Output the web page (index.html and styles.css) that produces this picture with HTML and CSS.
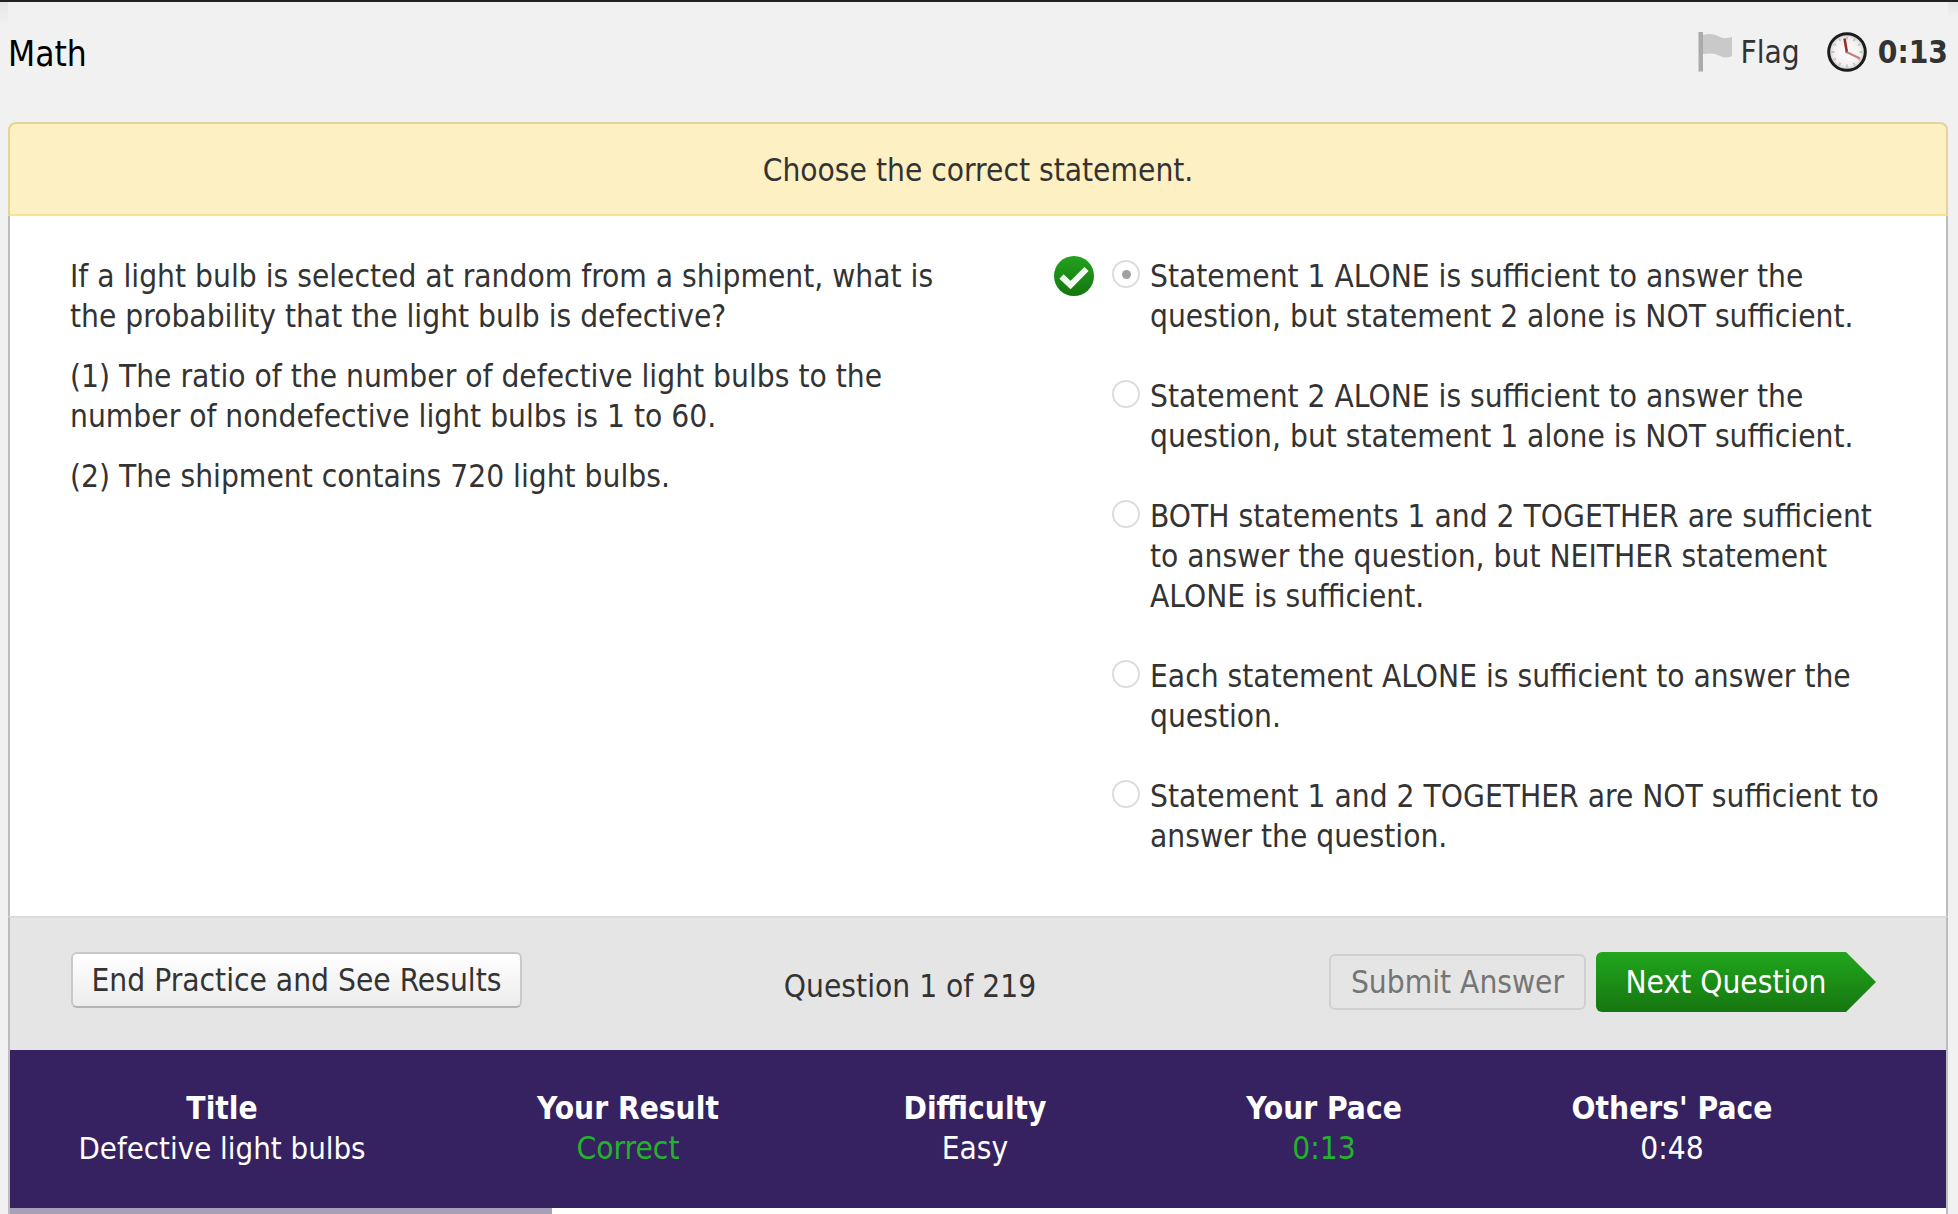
FILE: index.html
```html
<!DOCTYPE html>
<html lang="en">
<head>
<meta charset="utf-8">
<title>Math</title>
<link rel="stylesheet" href="styles.css">
</head>
<body>
<header class="topbar">
  <h1 class="section-name">Math</h1>
  <div class="tools">
    <span class="flag">
      <svg class="flag-icon" width="36" height="40" viewBox="0 0 36 40"><defs><filter id="soft" x="-10%" y="-10%" width="120%" height="120%"><feGaussianBlur stdDeviation=".45"/></filter></defs><g filter="url(#soft)"><rect x="1.500" y="0" width="4.500" height="39.500" fill="#ababab"/><path d="M6 3C12 1 18 2 23 5C27 7 31 6 35 5V24C31 26 27 26 23 24C18 21 12 21 6 22Z" fill="#c9c9c9"/></g></svg>
      <span>Flag</span>
    </span>
    <span class="timer">
      <svg class="clock" width="40" height="40" viewBox="0 0 40 40"><defs><filter id="softc" x="-10%" y="-10%" width="120%" height="120%"><feGaussianBlur stdDeviation=".4"/></filter><radialGradient id="cg" cx=".5" cy=".5" r=".55"><stop offset="0" stop-color="#fff"/><stop offset=".68" stop-color="#f3efef"/><stop offset="1" stop-color="#b5b5b5"/></radialGradient></defs><g filter="url(#softc)"><circle cx="20" cy="20" r="18.300" fill="url(#cg)" stroke="#1e1e1e" stroke-width="3"/><path d="M20 4.500v3M20 32.500v3M4.500 20h3M32.500 20h3M12 6.500l1.500 2.500M28 6.500l-1.500 2.500M6.500 12l2.500 1.500M33.500 12l-2.500 1.500M6.500 28l2.500-1.500M33.500 28l-2.500-1.500M12 33.500l1.500-2.500M28 33.500l-1.500-2.500" stroke="#c4c4c4" stroke-width="1.800"/><path d="M17.500 6.500L20 21" stroke="#9c2f2f" stroke-width="2.600"/><path d="M19.500 20L33 26.500" stroke="#c77c7c" stroke-width="2"/></g></svg>
      <b class="time">0:13</b>
    </span>
  </div>
</header>

<main class="panel">
  <div class="prompt">Choose the correct statement.</div>
  <div class="question-body">
    <section class="stem">
      <p>If a light bulb is selected at random from a shipment, what is<br>the probability that the light bulb is defective?</p>
      <p>(1) The ratio of the number of defective light bulbs to the<br>number of nondefective light bulbs is 1 to 60.</p>
      <p>(2) The shipment contains 720 light bulbs.</p>
    </section>
    <ul class="choices">
      <li class="choice">
        <span class="mark"><svg width="40" height="40" viewBox="0 0 40 40"><defs><linearGradient id="ck" x1="0" y1="0" x2="0" y2="1"><stop offset="0" stop-color="#22a21e"/><stop offset="1" stop-color="#14760f"/></linearGradient></defs><circle cx="20" cy="20" r="20" fill="url(#ck)"/><path d="M7.500 20.500L16.500 29L32.500 13" fill="none" stroke="#f4fbf4" stroke-width="6"/></svg></span>
        <span class="radio selected"></span>
        <span class="choice-text">Statement 1 ALONE is sufficient to answer the<br>question, but statement 2 alone is NOT sufficient.</span>
      </li>
      <li class="choice">
        <span class="mark"></span><span class="radio"></span>
        <span class="choice-text">Statement 2 ALONE is sufficient to answer the<br>question, but statement 1 alone is NOT sufficient.</span>
      </li>
      <li class="choice">
        <span class="mark"></span><span class="radio"></span>
        <span class="choice-text">BOTH statements 1 and 2 TOGETHER are sufficient<br>to answer the question, but NEITHER statement<br>ALONE is sufficient.</span>
      </li>
      <li class="choice">
        <span class="mark"></span><span class="radio"></span>
        <span class="choice-text">Each statement ALONE is sufficient to answer the<br>question.</span>
      </li>
      <li class="choice">
        <span class="mark"></span><span class="radio"></span>
        <span class="choice-text">Statement 1 and 2 TOGETHER are NOT sufficient to<br>answer the question.</span>
      </li>
    </ul>
  </div>
  <div class="actions">
    <button class="btn btn-end" type="button">End Practice and See Results</button>
    <span class="counter">Question 1 of 219</span>
    <div class="action-right">
      <button class="btn btn-submit" type="button">Submit Answer</button>
      <button class="btn-next" type="button">Next Question</button>
    </div>
  </div>
  <div class="stats">
    <div class="stat"><b>Title</b><span class="stat-name">Defective light bulbs</span></div>
    <div class="stat"><b>Your Result</b><span class="good">Correct</span></div>
    <div class="stat"><b>Difficulty</b><span>Easy</span></div>
    <div class="stat"><b>Your Pace</b><span class="good">0:13</span></div>
    <div class="stat"><b>Others' Pace</b><span>0:48</span></div>
  </div>
  <div class="progress"><div class="progress-fill"></div></div>
</main>
</body>
</html>
```

FILE: styles.css
```css
* { box-sizing: border-box; }
html, body { margin: 0; height: 1214px; overflow: hidden; }
body {
  background: #f1f1f1;
  color: #333;
  font-family: "DejaVu Sans Condensed", "DejaVu Sans", sans-serif;
  font-stretch: condensed;
  font-size: 31.4px;
  line-height: 40px;
  border-top: 2px solid #222;
  display: flex;
  flex-direction: column;
}
.topbar {
  height: 120px;
  padding: 30px 10px 0 8px;
  display: flex;
  justify-content: space-between;
  align-items: flex-start;
}
.topbar::before, .topbar::after {
  content: "";
  position: absolute;
  top: 2px;
  background: linear-gradient(#e6e6e6, #f1f1f1);
}
.topbar::before { left: 0; width: 8px; height: 24px; }
.topbar::after { right: 0; width: 10px; height: 16px; }
.section-name { margin: 0; font-size: 35px; font-weight: 400; line-height: 44px; color: #000; }
.tools { display: flex; gap: 27px; align-items: center; height: 40px; }
.flag, .timer { display: flex; align-items: center; }
.flag { gap: 7px; color: #333; }
.timer { gap: 11px; }
.flag-icon, .clock { display: block; }
.time { font-weight: 700; color: #333; }

.panel { width: 1940px; margin-left: 8px; }
.prompt {
  height: 94px;
  background: #fdf0c3;
  border: 2px solid #e2d49a;
  border-bottom-color: #fbe28c;
  border-radius: 8px 8px 0 0;
  text-align: center;
  line-height: 92px;
}
.question-body {
  height: 700px;
  background: #fff;
  border-left: 2px solid #bdbdbd;
  border-right: 2px solid #bdbdbd;
  padding: 40px 0 0 60px;
  display: flex;
}
.stem { width: 984px; flex: none; }
.stem p { margin: 0 0 20px; }
.choices { list-style: none; margin: 0; padding: 0; }
.choice { display: flex; align-items: flex-start; margin-bottom: 40px; }
.mark { width: 40px; height: 40px; margin-right: 18px; flex: none; }
.mark svg { display: block; }
.radio {
  width: 28px; height: 28px; margin-top: 4px; margin-right: 10px; flex: none;
  border: 2px solid #ddd;
  border-radius: 50%;
  background: #fff;
  display: flex; align-items: center; justify-content: center;
}
.radio.selected::after { content: ""; width: 9px; height: 9px; border-radius: 50%; background: #a0a0a0; }

.actions {
  height: 134px;
  background: #e5e5e5;
  border-left: 2px solid #bdbdbd;
  border-right: 2px solid #bdbdbd;
  border-top: 2px solid #dcdcdc;
  padding: 34px 70px 0 61px;
  display: flex;
  align-items: flex-start;
}
.btn { font: inherit; font-stretch: inherit; line-height: 1; border-radius: 6px; }
.btn-end {
  width: 451px; height: 56px; padding: 2px 0 0;
  color: #333;
  background: linear-gradient(#fff, #ececec);
  border: 2px solid #c9c9c9;
  border-bottom-color: #b4b4b4;
}
.counter { width: 776px; padding-top: 14px; text-align: center; white-space: nowrap; flex: none; }
.action-right { margin-left: auto; display: flex; gap: 10px; align-items: center; }
.btn-submit {
  width: 257px; height: 56px; padding: 2px 0 0;
  color: #757575;
  background: #e5e5e5;
  border: 2px solid #d0d0d0;
}
.btn-next {
  width: 280px; height: 60px; padding: 2px 20px 0 0;
  font: inherit; font-stretch: inherit; line-height: 1;
  color: #fff;
  border: 0;
  background: linear-gradient(#21a61d, #167610);
  border-radius: 6px 0 0 6px;
  clip-path: polygon(0 0, 250px 0, 100% 50%, 250px 100%, 0 100%);
}

.stats {
  height: 158px;
  background: #372261;
  color: #fff;
  border-left: 2px solid #bdbdbd;
  border-right: 2px solid #bdbdbd;
  padding-top: 38px;
  display: grid;
  grid-template-columns: 424px 388px 306px 392px 304px;
  text-align: center;
}
.stat b, .stat span { display: block; }
.stat .stat-name { font-size: 30.9px; }
.stat .good { color: #22b32b; }
.progress {
  height: 6px;
  background: #fff;
  border-left: 2px solid #bdbdbd;
  border-right: 2px solid #bdbdbd;
}
.progress-fill { width: 542px; height: 100%; background: #a89fb8; }
```
